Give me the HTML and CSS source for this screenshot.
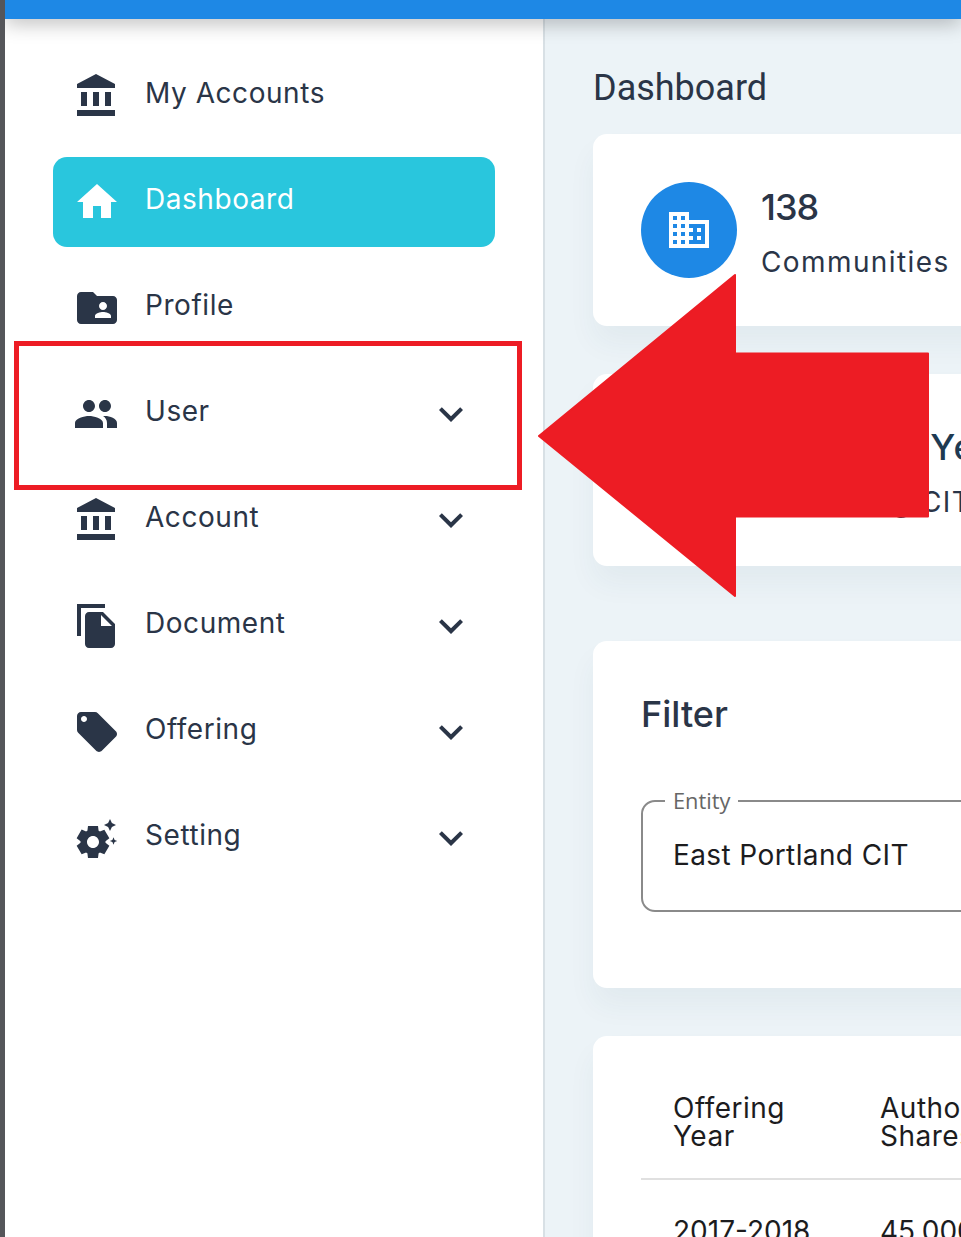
FILE: index.html
```html
<!DOCTYPE html>
<html lang="en">
<head>
<meta charset="utf-8">
<title>Dashboard</title>
<link rel="stylesheet" href="styles.css">
</head>
<body>
<div class="app">
  <header class="topbar"></header>
  <div class="layout">
    <nav class="sidebar">
      <a class="item"><svg class="icon" viewBox="0 0 24 24"><path d="M4 10v7h3v-7H4zm6 0v7h3v-7h-3zM2 22h19v-3H2v3zm14-12v7h3v-7h-3zm-4.500-9L2 6v2h19V6l-9.500-5z"/></svg><span class="label">My Accounts</span></a>
      <a class="item active"><svg class="icon" viewBox="0 0 24 24"><path d="M10 20v-6h4v6h5v-8h3L12 3 2 12h3v8z"/></svg><span class="label">Dashboard</span></a>
      <a class="item"><svg class="icon" viewBox="0 0 24 24"><path d="M20 6h-8l-2-2H4c-1.100 0-1.990.9-1.990 2L2 18c0 1.100.9 2 2 2h16c1.100 0 2-.9 2-2V8c0-1.100-.9-2-2-2zm-5 3c1.100 0 2 .9 2 2s-.9 2-2 2-2-.9-2-2 .9-2 2-2zm4 8h-8v-1c0-1.330 2.670-2 4-2s4 .67 4 2v1z"/></svg><span class="label">Profile</span></a>
      <a class="item"><svg class="icon" viewBox="0 0 24 24"><path d="M16 11c1.660 0 2.990-1.340 2.990-3S17.660 5 16 5c-1.660 0-3 1.340-3 3s1.340 3 3 3zm-8 0c1.660 0 2.990-1.340 2.990-3S9.660 5 8 5C6.340 5 5 6.340 5 8s1.340 3 3 3zm0 2c-2.330 0-7 1.170-7 3.500V19h14v-2.500c0-2.330-4.670-3.500-7-3.500zm8 0c-.29 0-.62.02-.97.05 1.160.84 1.970 1.970 1.970 3.450V19h5v-2.500c0-2.330-3.670-3.500-6-3.500z"/></svg><span class="label">User</span><svg class="icon chevron" viewBox="0 0 24 24"><path d="M16.590 8.590L12 13.170 7.410 8.590 6 10l6 6 6-6z"/></svg></a>
      <a class="item"><svg class="icon" viewBox="0 0 24 24"><path d="M4 10v7h3v-7H4zm6 0v7h3v-7h-3zM2 22h19v-3H2v3zm14-12v7h3v-7h-3zm-4.500-9L2 6v2h19V6l-9.500-5z"/></svg><span class="label">Account</span><svg class="icon chevron" viewBox="0 0 24 24"><path d="M16.590 8.590L12 13.170 7.410 8.590 6 10l6 6 6-6z"/></svg></a>
      <a class="item"><svg class="icon" viewBox="0 0 24 24"><path d="M16 1H2v16h2V3h12V1zm-1 4l6 6v10c0 1.100-.9 2-2 2H7.990C6.890 23 6 22.100 6 21l.01-14c0-1.100.89-2 1.990-2h7zm-1 7h5.500L14 6.500V12z"/></svg><span class="label">Document</span><svg class="icon chevron" viewBox="0 0 24 24"><path d="M16.590 8.590L12 13.170 7.410 8.590 6 10l6 6 6-6z"/></svg></a>
      <a class="item"><svg class="icon" viewBox="0 0 24 24"><path d="M21.410 11.580l-9-9C12.050 2.220 11.550 2 11 2H4c-1.100 0-2 .9-2 2v7c0 .55.22 1.050.59 1.420l9 9c.36.36.86.58 1.410.58.55 0 1.050-.22 1.410-.59l7-7c.37-.36.59-.86.59-1.410 0-.55-.23-1.060-.59-1.420zM5.500 7C4.670 7 4 6.330 4 5.500S4.670 4 5.500 4 7 4.670 7 5.500 6.330 7 5.500 7z"/></svg><span class="label">Offering</span><svg class="icon chevron" viewBox="0 0 24 24"><path d="M16.590 8.590L12 13.170 7.410 8.590 6 10l6 6 6-6z"/></svg></a>
      <a class="item"><svg class="icon" viewBox="0 0 24 24"><path d="M18.500 2.500l.95 2.050 2.050.95-2.050.95-.95 2.050-.95-2.050-2.050-.95 2.050-.95zM20.250 11.650l.55 1.300 1.300.55-1.300.55-.55 1.300-.55-1.300-1.300-.55 1.300-.55zm-4.010 2.720l1.940 1.470-2.500 4.330-2.240-.94c-.2.13-.42.26-.64.37l-.3 2.400h-5l-.3-2.410c-.22-.11-.43-.23-.64-.37l-2.240.94-2.500-4.330 1.940-1.470c-.01-.11-.01-.24-.01-.37s0-.26.01-.38l-1.940-1.470 2.500-4.330 2.240.94c.2-.13.42-.26.64-.37L7.500 6h5l.3 2.410c.22.11.43.23.64.37l2.240-.94 2.500 4.330-1.940 1.470c.01.12.01.25.01.37s0 .26-.01.37zM13 14c0-1.660-1.340-3-3-3s-3 1.340-3 3 1.340 3 3 3 3-1.340 3-3z"/></svg><span class="label">Setting</span><svg class="icon chevron" viewBox="0 0 24 24"><path d="M16.590 8.590L12 13.170 7.410 8.590 6 10l6 6 6-6z"/></svg></a>
    </nav>
    <main class="main">
      <h1 class="page-title">Dashboard</h1>
      <div class="content">
        <section class="card stat">
          <span class="circle"><svg class="icon" viewBox="0 0 24 24"><path d="M12 7V3H2v18h20V7H12zM6 19H4v-2h2v2zm0-4H4v-2h2v2zm0-4H4V9h2v2zm0-4H4V5h2v2zm4 12H8v-2h2v2zm0-4H8v-2h2v2zm0-4H8V9h2v2zm0-4H8V5h2v2zm10 12h-8v-2h2v-2h-2v-2h2v-2h-2V9h8v10zm-2-8h-2v2h2v-2zm0 4h-2v2h2v-2z"/></svg></span>
          <div class="stat-text"><div class="stat-value">138</div><div class="stat-label">Communities</div></div>
        </section>
        <section class="card stat second">
          <span class="circle"><svg class="icon" viewBox="0 0 24 24"><path d="M12 7V3H2v18h20V7H12zM6 19H4v-2h2v2zm0-4H4v-2h2v2zm0-4H4V9h2v2zm0-4H4V5h2v2zm4 12H8v-2h2v2zm0-4H8v-2h2v2zm0-4H8V9h2v2zm0-4H8V5h2v2zm10 12h-8v-2h2v-2h-2v-2h2v-2h-2V9h8v10zm-2-8h-2v2h2v-2zm0 4h-2v2h2v-2z"/></svg></span>
          <div class="stat-text"><div class="stat-value">Offering Year</div><div class="stat-label">Remaining CIT</div></div>
        </section>
        <section class="card filter">
          <h2 class="filter-title">Filter</h2>
          <fieldset class="field">
            <legend class="field-legend">Entity</legend>
            <div class="field-value">East Portland CIT</div>
          </fieldset>
        </section>
        <section class="card table-card">
          <table class="table">
            <thead>
              <tr><th class="col-year">Offering<br>Year</th><th>Authorized<br>Shares</th></tr>
            </thead>
            <tbody>
              <tr><td>2017-2018</td><td>45,000</td></tr>
            </tbody>
          </table>
        </section>
      </div>
    </main>
  </div>
</div>
<svg class="annotation" viewBox="0 0 961 1237" aria-hidden="true">
  <rect class="mark-box" x="16.500" y="343.500" width="503" height="144"/>
  <polygon class="mark-arrow" points="539,436 735,275 735,353.500 928,353.500 928,516.500 735,516.500 735,596"/>
</svg>
</body>
</html>
```
FILE: styles.css
```css
html, body {
  margin: 0;
  padding: 0;
  height: 100%;
  overflow: hidden;
}
body {
  background: #55565a;
  color: #2a3547;
  font-family: "Inter", "Liberation Sans", sans-serif;
  position: relative;
}
.app {
  margin-left: 5px;
  height: 1237px;
  display: flex;
  flex-direction: column;
  overflow: hidden;
  background: #ecf3f7;
}
.topbar {
  height: 19px;
  flex: none;
  background: #1e88e5;
  box-shadow: 0 4px 20px rgba(0, 0, 0, .28);
  position: relative;
  z-index: 2;
}
.layout {
  flex: 1;
  display: flex;
  min-height: 0;
}
.sidebar {
  flex: none;
  width: 442px;
  padding: 32px 48px;
  background: #fff;
  border-right: 2px solid #d8e0e5;
  display: flex;
  flex-direction: column;
  gap: 16px;
}
.item {
  height: 90px;
  flex: none;
  display: flex;
  align-items: center;
  gap: 24px;
  padding: 0 20px;
  border-radius: 14px;
  font-size: 28px;
}
.item.active {
  background: #29c6dd;
  color: #fff;
}
.icon {
  width: 48px;
  height: 48px;
  flex: none;
  fill: currentColor;
  display: block;
}
.label {
  line-height: 34px;
  margin-bottom: 6px;
  letter-spacing: .55px;
}
.chevron {
  margin-left: auto;
}
.main {
  flex: 1;
  min-width: 0;
  padding: 0 0 0 48px;
  overflow: hidden;
}
.page-title {
  margin: 48px 0 25px;
  font-family: "Roboto", sans-serif;
  font-size: 36px;
  font-weight: 400;
  line-height: 42px;
}
.content {
  width: 640px;
  display: flex;
  flex-direction: column;
}
.card {
  background: #fff;
  border-radius: 14px;
  box-shadow: 0 18px 28px rgba(40, 70, 90, .05);
}
.stat {
  height: 192px;
  box-sizing: border-box;
  padding: 48px;
  display: flex;
  gap: 24px;
  margin-bottom: 48px;
}
.stat.second {
  margin-bottom: 75px;
}
.circle {
  width: 96px;
  height: 96px;
  flex: none;
  border-radius: 50%;
  background: #1e88e5;
  color: #fff;
  display: flex;
  align-items: center;
  justify-content: center;
}
.stat-value {
  font-size: 36px;
  font-weight: 500;
  line-height: 50px;
  letter-spacing: -1px;
}
.second .stat-value {
  letter-spacing: 1.4px;
  word-spacing: 6px;
  color: #1e3a52;
}
.stat-label {
  font-size: 28px;
  line-height: 44px;
  margin-top: 8px;
  letter-spacing: 1.4px;
}
.filter {
  height: 347px;
  box-sizing: border-box;
  padding: 48px;
  margin-bottom: 48px;
}
.filter-title {
  margin: 0 0 49px;
  font-size: 36px;
  font-weight: 500;
  line-height: 50px;
}
.field {
  margin: 0;
  padding: 0 30px;
  border: 2px solid #8a8a8a;
  border-radius: 14px;
  height: 124px;
  box-sizing: border-box;
  min-width: 0;
}
.field-legend {
  margin-left: -8px;
  padding: 0 8px;
  font-family: "Open Sans", sans-serif;
  font-size: 21.8px;
  line-height: 26px;
  color: #666;
}
.field-value {
  font-size: 28px;
  line-height: 40px;
  letter-spacing: .4px;
  color: #1c1c1e;
  margin-top: 21px;
}
.table-card {
  height: 300px;
  box-sizing: border-box;
  padding: 48px;
}
.table {
  border-collapse: collapse;
  table-layout: fixed;
  width: 100%;
  font-size: 28px;
  color: #1c1c1e;
}
.table th {
  font-weight: 400;
  text-align: left;
  line-height: 28px;
  padding: 10px 32px 28px;
  border-bottom: 2px solid #e0e0e0;
  letter-spacing: .5px;
}
.table .col-year {
  width: 143px;
}
.table td {
  line-height: 34px;
  padding: 34px 32px;
}
.annotation {
  position: absolute;
  left: 0;
  top: 0;
  width: 961px;
  height: 1237px;
  z-index: 5;
}
.mark-box {
  fill: none;
  stroke: #ed1c24;
  stroke-width: 5;
}
.mark-arrow {
  fill: #ed1c24;
  stroke: #ed1c24;
  stroke-width: 2;
  stroke-linejoin: round;
}
```
